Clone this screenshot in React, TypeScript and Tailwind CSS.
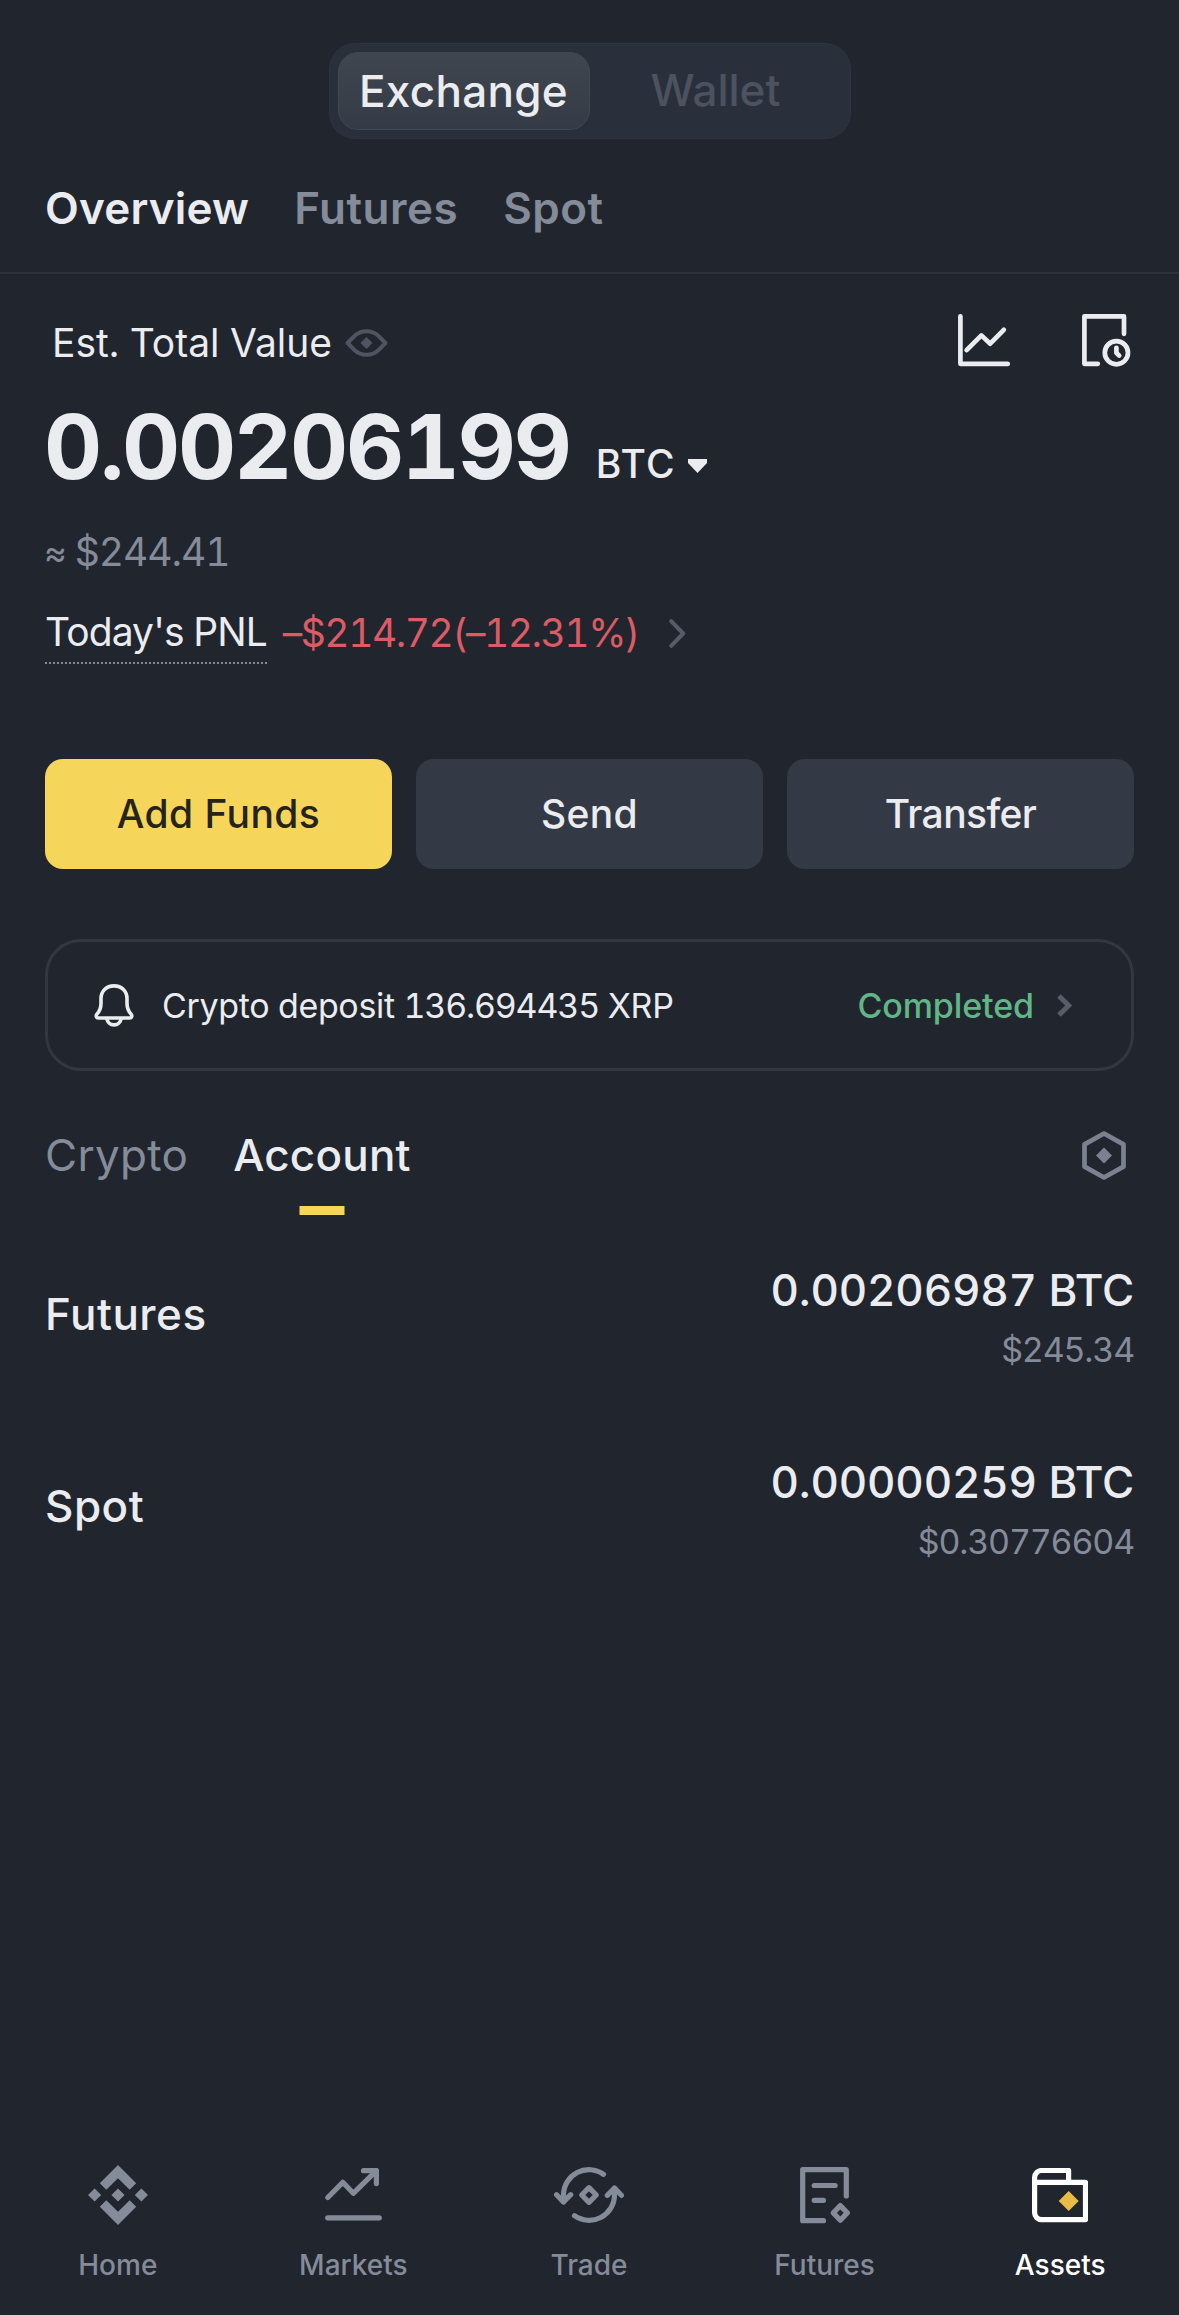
import type { ReactNode } from 'react';

function EyeIcon() {
  return (
    <svg width="43" height="28" viewBox="0 0 43 28" fill="none" className="shrink-0 text-[#4e5460]">
      <path
        d="M2.6 14 9 7.4C12.6 3.8 16.2 2.2 21.5 2.2S30.4 3.8 34 7.4L40.4 14 34 20.6c-3.6 3.6-7.2 5.2-12.5 5.2S12.6 24.2 9 20.6Z"
        stroke="currentColor"
        strokeWidth="4"
        strokeLinejoin="round"
      />
      <path d="m21.5 8 6 6-6 6-6-6Z" fill="currentColor" />
    </svg>
  );
}

function ChartIcon() {
  return (
    <svg width="52" height="53" viewBox="0 0 52 53" fill="none" stroke="currentColor" strokeWidth="4.7" strokeLinecap="round" strokeLinejoin="round">
      <path d="M2.4 2.4v47.4h47.3" />
      <path d="m8.6 36.2 14.8-14.8 8.8 8.3 13.6-13.9" />
    </svg>
  );
}

function HistoryIcon() {
  return (
    <svg width="49" height="53" viewBox="0 0 49 53" fill="none" stroke="currentColor" strokeWidth="4.7" strokeLinecap="round" strokeLinejoin="round">
      <path d="M15.8 49.8H2.4V2.4H42v17.4" />
      <circle cx="34.4" cy="38.7" r="11.6" />
      <path d="M34.4 33.8v5l2.8 2.8" />
    </svg>
  );
}

function BellIcon() {
  return (
    <svg width="40" height="43" viewBox="0 0 40 43" fill="none" stroke="currentColor" strokeWidth="3.6" strokeLinejoin="round">
      <path d="M20 1.9C12.2 1.9 7 7.3 7 14.6v4.6c0 5.2-1.4 7.9-3.9 10.7-1.6 1.9-.9 4.1 1.3 4.1h31.2c2.2 0 2.9-2.2 1.3-4.1-2.5-2.8-3.9-5.5-3.9-10.7v-4.6C33 7.3 27.8 1.9 20 1.9Z" />
      <path d="M12.8 34.5c.6 3.9 3.5 6.4 7.2 6.4s6.6-2.5 7.2-6.4" />
    </svg>
  );
}

function HexIcon() {
  return (
    <svg width="44" height="49" viewBox="0 0 44 49" fill="none" className="text-[#7a8291]">
      <path d="M22 2.5 41.5 13.4v22.2L22 46.5 2.5 35.6V13.4Z" stroke="currentColor" strokeWidth="4.7" strokeLinejoin="round" />
      <path d="m22 16.5 8 8-8 8-8-8Z" fill="currentColor" />
    </svg>
  );
}

function HomeIcon() {
  return (
    <svg width="60" height="60" viewBox="0 0 60 60" fill="currentColor">
      <path d="m30 0 18.2 18.2-6.5 6.6L30 13.2 18.3 24.8l-6.5-6.6Z" />
      <path d="m30 60 18.2-18.2-6.5-6.6L30 46.8 18.3 35.2l-6.5 6.6Z" />
      <path d="m6.6 23.4 6.6 6.6-6.6 6.6L0 30Zm23.4 0 6.6 6.6-6.6 6.6-6.6-6.6Zm23.4 0L60 30l-6.6 6.6-6.6-6.6Z" />
    </svg>
  );
}

function MarketsIcon() {
  return (
    <svg width="57" height="54" viewBox="0 0 57 54" fill="none" stroke="currentColor" strokeWidth="5.2" strokeLinecap="round" strokeLinejoin="round">
      <path d="m2.8 29.5 15-15.2 10.5 11L51.4 2.7" />
      <path d="M38.5 2.7h12.9v12.9" />
      <path d="M2.7 49.8h51.6" />
    </svg>
  );
}

function TradeIcon() {
  return (
    <svg width="72" height="60" viewBox="0 0 72 60" fill="none" stroke="currentColor" strokeWidth="5.2" strokeLinecap="round" strokeLinejoin="round">
      <path d="M10.5 36.5V30A25.4 25.4 0 0 1 50.5 9.3" />
      <path d="m3.6 29.7 6.9 7.3 7.2-7.3" />
      <path d="M61.5 23.5V30A25.4 25.4 0 0 1 21.5 50.7" />
      <path d="m68.4 30.3-6.9-7.3-7.2 7.3" />
      <path d="m36 22.7 7.3 7.3-7.3 7.3-7.3-7.3Z" />
    </svg>
  );
}

function FuturesIcon() {
  return (
    <svg width="50" height="57" viewBox="0 0 50 57" fill="none" stroke="currentColor" strokeWidth="5.2" strokeLinecap="round" strokeLinejoin="round">
      <path d="M23.5 53.7H2.7V2.7h43.6V29" />
      <path d="M14.2 18.5h20.9M14.2 33.3h9.3" />
      <path d="m40.3 38.6 7 7.3-7 7.3-7-7.3Z" />
    </svg>
  );
}

function AssetsIcon() {
  return (
    <svg width="56" height="55" viewBox="0 0 56 55" fill="none">
      <path
        d="M2.6 14.3V9.5a7 7 0 0 1 7-7h27v11.8M2.6 14.3h50.9v37.3H9.6a7 7 0 0 1-7-7Z"
        stroke="currentColor"
        strokeWidth="5.2"
        strokeLinejoin="round"
      />
      <path d="m36.7 23 10 10-10 10-10-10Z" fill="#e9bc45" />
    </svg>
  );
}

const actions = [
  { label: 'Add Funds', style: 'bg-[#f5d65b] text-[#26241a] tracking-[0.4px]' },
  { label: 'Send', style: 'bg-[#343a45] text-[#eaecf0] tracking-[0.3px]' },
  { label: 'Transfer', style: 'bg-[#343a45] text-[#eaecf0] tracking-[-0.6px]' },
];

const accounts = [
  { name: 'Futures', amount: '0.00206987 BTC', fiat: '$245.34' },
  { name: 'Spot', amount: '0.00000259 BTC', fiat: '$0.30776604' },
];

const navItems: { label: string; icon: ReactNode; active?: boolean }[] = [
  { label: 'Home', icon: <HomeIcon /> },
  { label: 'Markets', icon: <MarketsIcon /> },
  { label: 'Trade', icon: <TradeIcon /> },
  { label: 'Futures', icon: <FuturesIcon /> },
  { label: 'Assets', icon: <AssetsIcon />, active: true },
];

function Header() {
  return (
    <header>
      <div className="flex justify-center pt-[43px]">
        <div className="flex h-24 w-[522px] items-center rounded-[26px] border border-[#2e343e] bg-[#2a303b] px-2 text-[44px] font-medium">
          <div className="flex h-[78px] w-[252px] items-center justify-center rounded-[20px] border border-[#414751] bg-gradient-to-b from-[#40464f] to-[#353b46] tracking-[0.3px]">
            Exchange
          </div>
          <div className="flex-1 pb-0.5 text-center text-[#4c525e]">Wallet</div>
        </div>
      </div>
      <nav className="flex h-[135px] items-center gap-[45px] border-b-2 border-[#2d323c] pt-1 pl-[45px] text-[44px] font-semibold text-[#848b99]">
        <span className="tracking-[0.2px] text-[#eaecf0]">Overview</span>
        <span className="tracking-[0.5px]">Futures</span>
        <span className="tracking-[0.5px]">Spot</span>
      </nav>
    </header>
  );
}

function Balance() {
  return (
    <section>
      <div className="mt-10 flex h-[53px] items-center justify-between pr-[3px] pl-[7px]">
        <div className="flex items-center gap-[13px] pt-[5px]">
          <span className="text-[39px] leading-10">Est. Total Value</span>
          <EyeIcon />
        </div>
        <div className="flex gap-[72px]">
          <ChartIcon />
          <HistoryIcon />
        </div>
      </div>

      <div className="mt-[35px] flex h-[90px] items-center">
        <span className="-ml-px text-[90px] leading-none font-bold tracking-[-2.2px]">0.00206199</span>
        <div className="ml-[26px] flex items-center gap-3 pt-[33px]">
          <span className="text-[39px] leading-10 font-medium tracking-[1.2px]">BTC</span>
          <svg width="19" height="14" viewBox="0 0 19 14" fill="currentColor" className="mt-1">
            <path d="M0 0h19v4L9.5 14 0 4Z" />
          </svg>
        </div>
      </div>

      <div className="mt-10 flex h-10 items-center text-[39px] leading-10 text-[#848b99]">
        <span className="-ml-px mr-2 text-[35px]">≈</span>
        <span className="tracking-[-1px]">$244.41</span>
      </div>

      <div className="mt-10 flex h-[52px] items-start text-[39px]">
        <span className="border-b-2 border-dotted border-[#848b99] pb-2.5 leading-10 tracking-[-0.9px]">Today's PNL</span>
        <span className="ml-4 leading-[42px] tracking-[-1.5px] text-[#dc5b64]">–$214.72(–12.31%)</span>
        <svg width="17" height="29" viewBox="0 0 17 29" fill="none" className="mt-[7px] ml-[30px]">
          <path d="m2.2 2.2 12 12.3-12 12.3" stroke="#565c68" strokeWidth="4" strokeLinecap="round" strokeLinejoin="round" />
        </svg>
      </div>
    </section>
  );
}

function Notice() {
  return (
    <div className="mt-[70px] flex h-[132px] items-center rounded-[36px] border-[3px] border-[#323741] pr-[58px] pl-[46px] text-[34px]">
      <BellIcon />
      <span className="ml-7 tracking-[-0.35px]">
        Crypto deposit <span className="tracking-[-1.2px]">136.694435</span> XRP
      </span>
      <span className="ml-auto font-medium tracking-[-0.1px] text-[#61b587]">Completed</span>
      <svg width="16" height="23" viewBox="0 0 16 23" fill="none" className="ml-[23px]">
        <path d="m2 2 9.7 9.5L2 21" stroke="#565c68" strokeWidth="5" />
      </svg>
    </div>
  );
}

function Accounts() {
  return (
    <section>
      <div className="mt-[59px] flex h-[50px] items-center pr-2 text-[44px]">
        <span className="tracking-[0.3px] text-[#848b99]">Crypto</span>
        <div className="relative ml-[45px] font-medium tracking-[0.2px]">
          Account
          <span className="absolute top-[84px] left-1/2 h-[9px] w-[45px] -translate-x-1/2 bg-[#f5d65b]" />
        </div>
        <span className="ml-auto">
          <HexIcon />
        </span>
      </div>

      <div className="mt-[38px]">
        {accounts.map((a) => (
          <div key={a.name} className="flex h-48 items-center justify-between">
            <span className="text-[44px] font-medium tracking-[0.5px]">{a.name}</span>
            <div className="pt-[7px] text-right">
              <div className="text-[44px] leading-[50px] font-medium tracking-[-0.2px]">{a.amount}</div>
              <div className="mt-[15px] text-[34px] leading-10 tracking-[-1.2px] text-[#848b99]">{a.fiat}</div>
            </div>
          </div>
        ))}
      </div>
    </section>
  );
}

export default function App() {
  return (
    <div className="flex h-[2315px] w-[1179px] flex-col overflow-hidden bg-[#21252e] font-['Inter','Liberation_Sans',sans-serif] text-[#eaecf0] tabular-nums">
      <Header />
      <main className="px-[45px]">
        <Balance />
        <div className="mt-[95px] grid grid-cols-3 gap-6">
          {actions.map((a) => (
            <button key={a.label} className={`h-[110px] rounded-[18px] text-[39px] font-medium ${a.style}`}>
              {a.label}
            </button>
          ))}
        </div>
        <Notice />
        <Accounts />
      </main>
      <nav className="mt-auto grid grid-cols-5 pr-px pb-8">
        {navItems.map((item) => (
          <div
            key={item.label}
            className={`flex flex-col items-center gap-[17px] text-[28px] leading-9 font-medium ${item.active ? 'text-white' : 'text-[#848b99]'}`}
          >
            <div className="flex h-[70px] items-center">{item.icon}</div>
            {item.label}
          </div>
        ))}
      </nav>
    </div>
  );
}
